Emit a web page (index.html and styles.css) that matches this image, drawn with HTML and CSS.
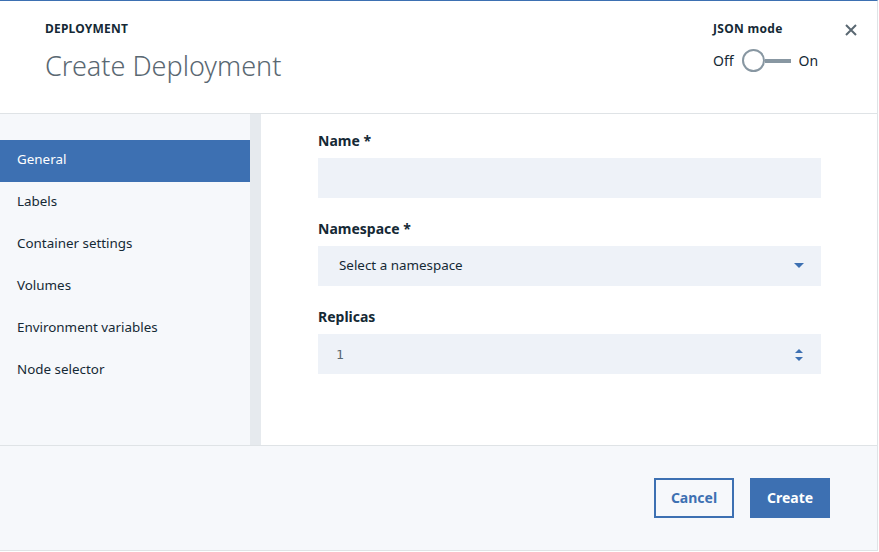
FILE: index.html
```html
<!DOCTYPE html>
<html>
<head>
<meta charset="utf-8">
<link rel="stylesheet" href="styles.css">
</head>
<body>
<div class="modal">
  <header class="head">
    <div class="titles">
      <div class="eyebrow">DEPLOYMENT</div>
      <h1 class="title">Create Deployment</h1>
    </div>
    <div class="json">
      <div class="json-label">JSON mode</div>
      <div class="toggle">
        <span>Off</span>
        <span class="switch"><span class="knob"></span><span class="track"></span></span>
        <span>On</span>
      </div>
    </div>
    <button class="close" aria-label="close">
      <svg width="12" height="12" viewBox="0 0 12 12"><path d="M1 1L11 11M11 1L1 11" stroke="#5a6872" stroke-width="2"/></svg>
    </button>
  </header>
  <div class="body">
    <nav class="side">
      <a class="item active">General</a>
      <a class="item">Labels</a>
      <a class="item">Container settings</a>
      <a class="item">Volumes</a>
      <a class="item">Environment variables</a>
      <a class="item">Node selector</a>
    </nav>
    <div class="strip"></div>
    <main class="form">
      <div class="field">
        <label class="label">Name *</label>
        <div class="input"></div>
      </div>
      <div class="field">
        <label class="label">Namespace *</label>
        <div class="input select">
          <span class="placeholder">Select a namespace</span>
          <svg class="caret" width="10" height="6" viewBox="0 0 10 6"><path d="M0 0H10L5 5Z" fill="#3d70b2"/></svg>
        </div>
      </div>
      <div class="field">
        <label class="label">Replicas</label>
        <div class="input number">
          <span class="num">1</span>
          <svg class="spin" width="10" height="14" viewBox="0 0 10 14"><path d="M1 5L5 1L9 5Z" fill="#3d70b2"/><path d="M1 9H9L5 13Z" fill="#3d70b2"/></svg>
        </div>
      </div>
    </main>
  </div>
  <footer class="foot">
    <button class="btn secondary">Cancel</button>
    <button class="btn primary">Create</button>
  </footer>
</div>
</body>
</html>
```
FILE: styles.css
```css
* { box-sizing: border-box; }
html, body { margin: 0; padding: 0; background: #fff; }
body {
  font-family: "Noto Sans", "Open Sans", sans-serif;
  color: #152935;
  width: 879px;
  height: 552px;
  overflow: hidden;
}
.modal {
  width: 878px;
  height: 551px;
  border-top: 1px solid #3d70b2;
  border-right: 1px solid #dfe3e6;
  border-bottom: 1px solid #dfe3e6;
  display: flex;
  flex-direction: column;
}
.head {
  height: 113px;
  border-bottom: 1px solid #dfe3e6;
  display: flex;
  padding: 19px 20px 0 45px;
  background: #fff;
}
.titles { flex: 1; }
.eyebrow {
  font-size: 12px;
  font-weight: 700;
  line-height: 18px;
  letter-spacing: 0.2px;
}
.title {
  margin: 11px 0 0;
  font-size: 27px;
  font-weight: 300;
  line-height: 34px;
  color: #5a6872;
}
.json { width: 132px; }
.json-label {
  font-size: 12px;
  font-weight: 700;
  line-height: 18px;
  letter-spacing: 0.3px;
}
.toggle {
  margin-top: 11px;
  display: flex;
  align-items: center;
  gap: 8px;
  font-size: 14px;
  line-height: 20px;
}
.switch {
  display: flex;
  align-items: center;
}
.knob {
  width: 23px;
  height: 23px;
  border: 2px solid #8897a2;
  border-radius: 50%;
  background: #fff;
}
.track {
  width: 26px;
  height: 4px;
  background: #8897a2;
}
.close {
  border: 0;
  background: none;
  padding: 0;
  width: 12px;
  height: 12px;
  margin-top: 4px;
  display: flex;
}
.body {
  flex: 1;
  display: flex;
  border-bottom: 1px solid #dfe3e6;
}
.side {
  width: 250px;
  background: #f6f8fb;
  padding-top: 26px;
  display: flex;
  flex-direction: column;
}
.item {
  height: 42px;
  display: flex;
  align-items: center;
  padding: 0 0 4px 17px;
  font-size: 13.4px;
  color: #152935;
}
.item.active {
  background: #3d70b2;
  color: #fff;
}
.strip {
  width: 11px;
  background: #e6eaee;
}
.form {
  flex: 1;
  padding: 18px 0 0 57px;
  background: #fff;
}
.field { margin-bottom: 22px; width: 503px; }
.label {
  display: block;
  font-size: 14px;
  font-weight: 700;
  line-height: 18px;
  margin-bottom: 8px;
}
.input {
  height: 40px;
  background: #eef2f8;
  display: flex;
  align-items: center;
  position: relative;
}
.select { padding-bottom: 3px; }
.placeholder {
  padding-left: 21px;
  font-size: 13.4px;
  color: #152935;
}
.caret { position: absolute; right: 17px; top: 17px; }
.num {
  padding-left: 18px;
  font-family: "DejaVu Sans Mono", monospace;
  font-size: 13px;
  color: #5a6872;
}
.spin { position: absolute; right: 17px; top: 14px; }
.foot {
  height: 104px;
  background: #f6f8fb;
  display: flex;
  justify-content: flex-end;
  align-items: flex-start;
  padding: 32px 47px 0 0;
  gap: 16px;
}
.btn {
  width: 80px;
  height: 40px;
  font-family: "Noto Sans", "Open Sans", sans-serif;
  font-size: 14px;
  font-weight: 700;
  border: 2px solid #3d70b2;
  padding: 0 0 2px;
}
.secondary { background: transparent; color: #3d70b2; }
.primary { background: #3d70b2; color: #fff; }
```
